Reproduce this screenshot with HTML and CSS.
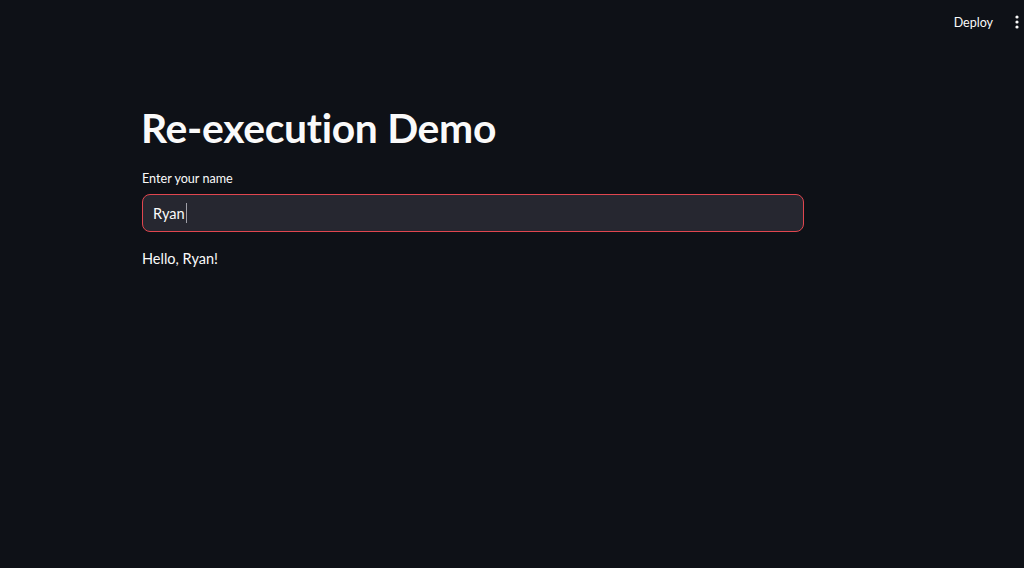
FILE: index.html
```html
<!DOCTYPE html>
<html lang="en">
<head>
  <meta charset="UTF-8">
  <meta name="viewport" content="width=device-width, initial-scale=1.0">
  <title>Re-execution Demo</title>
  <link rel="stylesheet" href="styles.css">
</head>
<body>
  <header class="topbar">
    <span class="deploy">Deploy</span>
    <span class="menu">
      <svg width="4" height="14" viewBox="0 0 4 14">
        <circle cx="2" cy="2" r="1.6" fill="#fafafa"/>
        <circle cx="2" cy="7" r="1.6" fill="#fafafa"/>
        <circle cx="2" cy="12" r="1.6" fill="#fafafa"/>
      </svg>
    </span>
  </header>

  <main class="block">
    <h1 class="title">Re-execution Demo</h1>

    <div class="field">
      <label class="label">Enter your name</label>
      <div class="input">Ryan<span class="caret"></span></div>
    </div>

    <p class="greeting">Hello, Ryan!</p>
  </main>
</body>
</html>
```

FILE: styles.css
```css
body {
  margin: 0;
  background-color: #0e1117;
  color: #fafafa;
  font-family: Lato, "Noto Sans", sans-serif;
  height: 568px;
  overflow: hidden;
}
.topbar {
  display: flex;
  justify-content: flex-end;
  align-items: center;
  height: 44px;
  padding-right: 0;
}
.deploy {
  font-size: 12.5px;
  margin-right: 17px;
}
.menu {
  display: flex;
  align-items: center;
  width: 14px;
  justify-content: center;
}
.block {
  width: 662px;
  margin-left: 142px;
  padding-top: 56px;
}
.title {
  font-size: 40.8px;
  font-weight: 700;
  margin: 0 0 0 -1px;
  line-height: 56px;
  letter-spacing: -0.3px;
}
.field {
  margin-top: 15px;
}
.label {
  display: block;
  font-size: 12.6px;
  line-height: 16px;
  margin-bottom: 7px;
}
.input {
  box-sizing: border-box;
  height: 38px;
  border: 1px solid #e0464f;
  border-radius: 8px;
  background-color: #262730;
  padding: 0 10px;
  display: flex;
  align-items: center;
  font-size: 14.6px;
}
.caret {
  display: inline-block;
  width: 1px;
  height: 20px;
  background-color: #a0a0a8;
  margin-left: 1px;
}
.greeting {
  font-size: 14.5px;
  margin: 18px 0 0;
}
```
